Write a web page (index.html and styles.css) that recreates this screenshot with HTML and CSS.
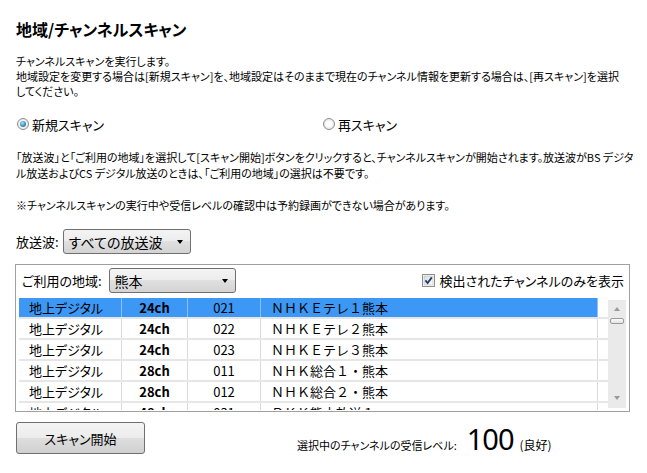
FILE: index.html
```html
<!DOCTYPE html>
<html lang="ja">
<head>
<meta charset="utf-8">
<title>地域/チャンネルスキャン</title>
<link rel="stylesheet" href="styles.css">
</head>
<body>
<div class="page">
  <h1 class="title">地域/チャンネルスキャン</h1>
  <p class="intro">チャンネルスキャンを実行します。<br>地域設定を変更する場合は[新規スキャン]を、地域設定はそのままで現在のチャンネル情報を更新する場合は、[再スキャン]を選択<br>してください。</p>
  <div class="radios">
    <label class="radio radio-first"><span class="radio-dot checked"></span>新規スキャン</label>
    <label class="radio"><span class="radio-dot"></span>再スキャン</label>
  </div>
  <p class="para">「放送波」と「ご利用の地域」を選択して[スキャン開始]ボタンをクリックすると、チャンネルスキャンが開始されます。放送波がBS デジタ<br>ル放送およびCS デジタル放送のときは、「ご利用の地域」の選択は不要です。</p>
  <p class="note">※チャンネルスキャンの実行中や受信レベルの確認中は予約録画ができない場合があります。</p>
  <div class="wave-row">
    <span class="label">放送波:</span>
    <div class="select wave-select"><span>すべての放送波</span><span class="arrow"></span></div>
  </div>
  <div class="group">
    <div class="group-head">
      <span class="label region-label">ご利用の地域:</span>
      <div class="select region-select"><span>熊本</span><span class="arrow"></span></div>
      <label class="check">
        <svg class="checkbox" width="13" height="13" viewBox="0 0 13 13">
          <defs><linearGradient id="cbg" x1="0" y1="0" x2="1" y2="1"><stop offset="0" stop-color="#dcdcdc"/><stop offset="1" stop-color="#ffffff"/></linearGradient></defs>
          <rect x="0.5" y="0.5" width="12" height="12" fill="#fff" stroke="#8e8f8f"/>
          <rect x="2" y="2" width="9" height="9" fill="url(#cbg)" stroke="#b9b9b9" stroke-width="0.6"/>
          <path d="M3.4 6.4 L5.6 9 L9.8 3.4" fill="none" stroke="#1f3d75" stroke-width="1.8"/>
        </svg>
        <span>検出されたチャンネルのみを表示</span>
      </label>
    </div>
    <div class="list">
      <div class="rows">
        <div class="row selected"><span class="cell c1">地上デジタル</span><span class="cell c2">24ch</span><span class="cell c3">021</span><span class="cell c4">ＮＨＫＥテレ１熊本</span><span class="cell c5"></span></div>
        <div class="row"><span class="cell c1">地上デジタル</span><span class="cell c2">24ch</span><span class="cell c3">022</span><span class="cell c4">ＮＨＫＥテレ２熊本</span><span class="cell c5"></span></div>
        <div class="row"><span class="cell c1">地上デジタル</span><span class="cell c2">24ch</span><span class="cell c3">023</span><span class="cell c4">ＮＨＫＥテレ３熊本</span><span class="cell c5"></span></div>
        <div class="row"><span class="cell c1">地上デジタル</span><span class="cell c2">28ch</span><span class="cell c3">011</span><span class="cell c4">ＮＨＫ総合１・熊本</span><span class="cell c5"></span></div>
        <div class="row"><span class="cell c1">地上デジタル</span><span class="cell c2">28ch</span><span class="cell c3">012</span><span class="cell c4">ＮＨＫ総合２・熊本</span><span class="cell c5"></span></div>
        <div class="row"><span class="cell c1">地上デジタル</span><span class="cell c2">48ch</span><span class="cell c3">031</span><span class="cell c4">ＲＫＫ熊本放送１</span><span class="cell c5"></span></div>
      </div>
      <div class="scrollbar">
        <span class="sb-up"></span>
        <span class="sb-thumb"></span>
        <span class="sb-space"></span>
        <span class="sb-down"></span>
      </div>
    </div>
  </div>
  <div class="footer">
    <button class="btn" type="button">スキャン開始</button>
    <div class="level">
      <span class="level-label">選択中のチャンネルの受信レベル:</span>
      <span class="level-value">100</span>
      <span class="level-status">(良好)</span>
    </div>
  </div>
</div>
</body>
</html>
```

FILE: styles.css
```css
html, body {
  margin: 0;
  background: #ffffff;
}

body {
  color: #000000;
  font-family: "Noto Sans CJK JP", "Noto Sans", sans-serif;
  font-feature-settings: "palt";
}

.page {
  padding-left: 16px;
}

.title {
  margin: 0;
  padding-top: 18px;
  font-size: 16px;
  line-height: 22px;
  font-weight: 700;
}

.intro {
  margin: 14px 0 0;
  font-size: 11px;
  line-height: 15px;
  white-space: nowrap;
}

.radios {
  display: flex;
  align-items: center;
  height: 20px;
  margin-top: 15px;
  font-size: 13px;
}

.radio {
  display: flex;
  align-items: center;
  gap: 3px;
}

.radio-first {
  width: 306px;
}

.radio-dot {
  display: flex;
  align-items: center;
  justify-content: center;
  width: 12px;
  height: 12px;
  margin-left: 1px;
  box-sizing: border-box;
  border: 1px solid #8e8e8e;
  border-radius: 50%;
  background: radial-gradient(circle at 50% 50%, #ffffff 30%, #d6d6d6 100%);
}

.radio-dot.checked::after {
  content: "";
  width: 6px;
  height: 6px;
  border-radius: 50%;
  background: radial-gradient(circle at 40% 35%, #a9e4f2 0%, #3c8fbf 55%, #17577f 100%);
}

.para {
  margin: 15px 0 0;
  font-size: 11px;
  line-height: 16px;
  white-space: nowrap;
}

.note {
  margin: 16px 0 0;
  font-size: 11px;
  line-height: 16px;
  white-space: nowrap;
}

.wave-row {
  display: flex;
  align-items: center;
  gap: 4px;
  height: 25px;
  margin-top: 16px;
  font-size: 13px;
}

.select {
  display: flex;
  align-items: center;
  justify-content: space-between;
  height: 25px;
  box-sizing: border-box;
  padding: 0 7px 0 5px;
  border: 1px solid #707070;
  border-radius: 3px;
  background: linear-gradient(#f4f4f4, #ececec 50%, #e0e0e0 50%, #d3d3d3);
  font-size: 14px;
}

.arrow {
  width: 0;
  height: 0;
  border-left: 3.5px solid transparent;
  border-right: 3.5px solid transparent;
  border-top: 4px solid #000000;
  margin-top: 1px;
}

.wave-select {
  width: 128px;
}

.group {
  width: 615px;
  margin: 10px 0 0 -1px;
  box-sizing: border-box;
  padding: 3px 3px 1px 3px;
  border: 1px solid #a0a0a0;
}

.group-head {
  display: flex;
  align-items: center;
  height: 25px;
  margin-bottom: 5px;
  font-size: 13px;
}

.region-label {
  margin-left: 3px;
  margin-right: 7px;
}

.region-select {
  width: 127px;
}

.check {
  display: flex;
  align-items: center;
  gap: 4px;
  margin-left: auto;
  margin-right: 2px;
}

.checkbox {
  display: block;
}

.list {
  display: flex;
  height: 112px;
  overflow: hidden;
}

.rows {
  flex: 1;
  overflow: hidden;
}

.row {
  display: flex;
  height: 19px;
  border-bottom: 2px solid #e6e6e6;
  font-size: 13px;
  line-height: 19px;
  white-space: nowrap;
}

.cell {
  box-sizing: border-box;
  border-right: 1px solid #dadada;
}

.c1 {
  width: 103px;
  padding-left: 10px;
}

.c2 {
  width: 66px;
  text-align: center;
  font-weight: 700;
}

.c3 {
  width: 73px;
  text-align: center;
}

.c4 {
  width: 337px;
  padding-left: 10px;
  font-feature-settings: normal;
}

.c5 {
  flex: 1;
  border-right: none;
}

.selected .c1,
.selected .c2,
.selected .c3,
.selected .c4 {
  background: #3d97f4;
  border-right-color: #8cc0f7;
}

.scrollbar {
  display: flex;
  flex-direction: column;
  align-items: center;
  width: 18px;
  box-sizing: border-box;
  margin-top: 2px;
  margin-bottom: 2px;
  padding: 7px 0 8px;
  background: #eaeaea;
}

.sb-up {
  width: 0;
  height: 0;
  border-left: 3px solid transparent;
  border-right: 3px solid transparent;
  border-bottom: 4px solid #9a9a9a;
}

.sb-thumb {
  width: 14px;
  height: 6px;
  margin-top: 7px;
  box-sizing: border-box;
  border: 1px solid #9a9a9a;
  border-radius: 2px;
  background: linear-gradient(#fbfbfb, #e2e2e2);
}

.sb-space {
  flex: 1;
}

.sb-down {
  width: 0;
  height: 0;
  border-left: 3px solid transparent;
  border-right: 3px solid transparent;
  border-top: 4px solid #9a9a9a;
}

.footer {
  display: flex;
  align-items: center;
  margin-top: 10px;
}

.btn {
  width: 129px;
  height: 32px;
  padding: 0;
  border: 1px solid #707070;
  border-radius: 3px;
  background: linear-gradient(#f4f4f4, #ececec 50%, #dedede 50%, #d0d0d0);
  color: #000000;
  font-family: inherit;
  font-feature-settings: "palt";
  font-size: 13px;
}

.level {
  display: flex;
  align-items: baseline;
  margin-left: 152px;
  margin-top: 2px;
}

.level-label {
  font-size: 11px;
}

.level-value {
  margin-left: 10px;
  font-family: "Noto Sans", sans-serif;
  font-size: 29px;
  line-height: 30px;
  letter-spacing: -1px;
}

.level-status {
  margin-left: 6px;
  font-size: 12px;
}
```
